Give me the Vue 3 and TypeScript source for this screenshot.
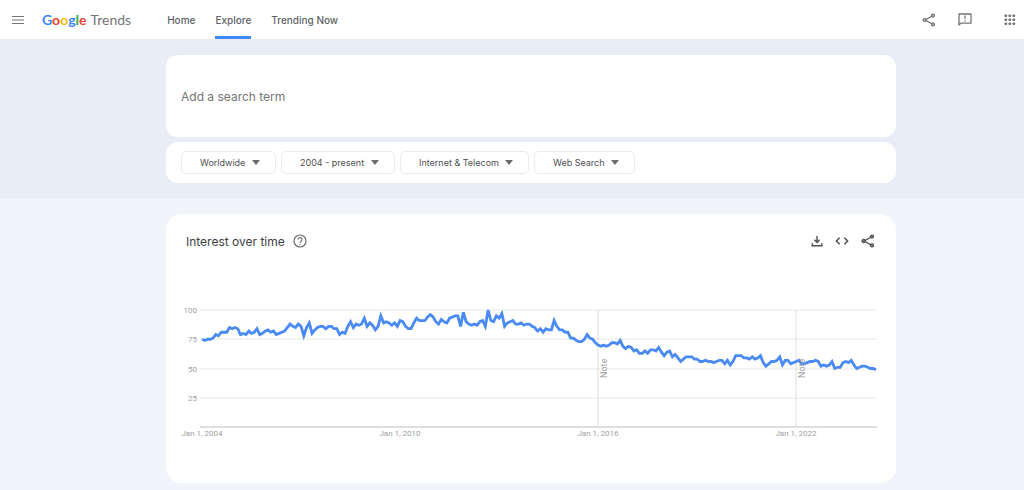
<script setup lang="ts">
import { ref } from 'vue'

interface Filter {
  id: string
  label: string
  value: string
}

const links = [
  { label: 'Home', active: false },
  { label: 'Explore', active: true },
  { label: 'Trending Now', active: false },
]

const filters: Filter[] = [
  { id: 'geo', label: 'Location', value: 'Worldwide' },
  { id: 'time', label: 'Time range', value: '2004 - present' },
  { id: 'category', label: 'Category', value: 'Internet & Telecom' },
  { id: 'source', label: 'Search type', value: 'Web Search' },
]

const term = ref('')

// Monthly interest values, January 2004 onwards
const interest: number[] = [
  75, 74, 75, 75, 76, 79, 78, 81, 81, 81, 85, 84,
  85, 84, 79, 80, 79, 82, 80, 81, 84, 79, 80, 82,
  83, 81, 82, 79, 80, 81, 82, 85, 88, 86, 85, 88,
  86, 78, 85, 89, 80, 83, 85, 86, 86, 84, 86, 86,
  84, 84, 79, 81, 80, 86, 90, 85, 88, 87, 88, 93,
  86, 89, 87, 83, 86, 95, 89, 90, 89, 87, 89, 86,
  91, 90, 86, 84, 84, 89, 93, 91, 91, 91, 94, 96,
  94, 90, 88, 92, 90, 89, 93, 94, 95, 95, 86, 98,
  90, 88, 87, 88, 87, 90, 91, 86, 100, 91, 90, 95,
  93, 97, 86, 89, 90, 91, 88, 88, 89, 87, 88, 88,
  86, 85, 82, 84, 81, 84, 83, 83, 91, 86, 83, 83,
  81, 81, 76, 76, 74, 73, 73, 75, 79, 76, 75, 72,
  70, 69, 70, 69, 70, 72, 72, 71, 74, 69, 67, 69,
  68, 65, 66, 63, 63, 65, 63, 66, 66, 65, 68, 64,
  61, 64, 65, 60, 62, 59, 56, 58, 60, 60, 60, 58,
  58, 56, 56, 57, 56, 56, 55, 56, 57, 57, 54, 57,
  53, 56, 61, 61, 61, 59, 59, 58, 60, 58, 59, 61,
  55, 52, 54, 56, 56, 57, 60, 53, 57, 57, 54, 55,
  56, 57, 54, 54, 55, 56, 56, 57, 56, 52, 53, 52,
  53, 56, 50, 51, 51, 55, 56, 55, 57, 53, 50, 51,
  52, 52, 51, 50, 50, 49,
]

const plot = { left: 36, right: 710, top: 10, bottom: 127 }
const step = (plot.right - plot.left) / (interest.length - 1)
const xAt = (month: number) => plot.left + month * step
const yAt = (value: number) => plot.bottom - (value / 100) * (plot.bottom - plot.top)

const line = interest.map((v, i) => `${xAt(i).toFixed(2)},${yAt(v).toFixed(2)}`).join(' ')
const levels = [100, 75, 50, 25].map((v) => ({ value: v, y: Math.round(yAt(v)) }))
const dates = [2004, 2010, 2016, 2022].map((year) => ({
  label: `Jan 1, ${year}`,
  x: Math.round(xAt((year - 2004) * 12)),
}))
const notes = dates.slice(2)
</script>

<template>
  <div class="page">
    <header class="topbar">
      <button class="icon-btn menu" type="button" aria-label="Main menu">
        <svg width="12" height="10" viewBox="0 0 12 10">
          <path d="M0 1.5h12M0 5h12M0 8.5h12" stroke="#757575" stroke-width="1.2" />
        </svg>
      </button>
      <a class="logo" href="#">
        <span class="google"><span class="b">G</span><span class="r">o</span><span class="y">o</span><span class="b">g</span><span class="g">l</span><span class="r">e</span></span>
        <span class="product">Trends</span>
      </a>
      <nav class="nav">
        <a v-for="link in links" :key="link.label" href="#" :class="{ active: link.active }">{{ link.label }}</a>
      </nav>
      <div class="tools">
        <button class="icon-btn" type="button" aria-label="Share">
          <svg width="14" height="14" viewBox="0 0 14 14" fill="none" stroke="#757575" stroke-width="1.2">
            <path d="M3 7l8-4.4M3 7l8 4.4" />
            <g fill="#b5b5b5"><circle cx="2.6" cy="7" r="1.5" /><circle cx="11" cy="2.6" r="1.5" /><circle cx="11" cy="11.4" r="1.5" /></g>
          </svg>
        </button>
        <button class="icon-btn" type="button" aria-label="Send feedback">
          <svg width="14" height="14" viewBox="0 0 14 14" fill="none" stroke="#757575" stroke-width="1.3">
            <path d="M1 12V1h12v9.2H2.8z" stroke-linejoin="round" />
            <path d="M7 2.6v3.2M7 7.2v1.4" />
          </svg>
        </button>
        <button class="icon-btn apps" type="button" aria-label="Google apps">
          <svg width="12" height="12" viewBox="0 0 12 12" fill="#757575">
            <template v-for="r in 3" :key="r">
              <rect v-for="c in 3" :key="c" :x="c * 4 - 3.5" :y="r * 4 - 3.5" width="2.6" height="2.6" rx="0.8" />
            </template>
          </svg>
        </button>
      </div>
    </header>

    <section class="hero">
      <form class="search" @submit.prevent>
        <input v-model="term" type="text" placeholder="Add a search term" aria-label="Add a search term" />
      </form>
      <div class="filters">
        <label v-for="f in filters" :key="f.id" class="filter" :for="f.id">
          <select :id="f.id" :aria-label="f.label">
            <option>{{ f.value }}</option>
          </select>
        </label>
      </div>
    </section>

    <main class="content">
      <article class="card">
        <div class="card-head">
          <h1>Interest over time</h1>
          <button class="icon-btn help" type="button" aria-label="Help">
            <svg width="14" height="14" viewBox="0 0 14 14" fill="none" stroke="#6b6b6b" stroke-width="1.2">
              <circle cx="7" cy="7" r="6" />
              <path d="M5 5.6a2 2 0 1 1 3.2 1.6C7.4 7.8 7 8 7 8.9M7 9.9v1.2" />
            </svg>
          </button>
          <div class="actions">
            <button class="icon-btn" type="button" aria-label="Download CSV">
              <svg width="12" height="12" viewBox="0 0 12 12" fill="none" stroke="#505050" stroke-width="1.4">
                <path d="M6 1v6M3.4 4.8L6 7.4l2.6-2.6M1.2 8.2v2.6h9.6V8.2" />
              </svg>
            </button>
            <button class="icon-btn" type="button" aria-label="Embed">
              <svg width="14" height="12" viewBox="0 0 14 12" fill="none" stroke="#505050" stroke-width="1.5">
                <path d="M4.6 2.8L1.4 6l3.2 3.2M9.4 2.8L12.6 6 9.4 9.2" />
              </svg>
            </button>
            <button class="icon-btn" type="button" aria-label="Share chart">
              <svg width="14" height="14" viewBox="0 0 14 14" fill="none" stroke="#505050" stroke-width="1.3">
                <path d="M3 7l8-4.4M3 7l8 4.4" />
                <g fill="#888"><circle cx="2.6" cy="7" r="1.5" /><circle cx="11" cy="2.6" r="1.5" /><circle cx="11" cy="11.4" r="1.5" /></g>
              </svg>
            </button>
          </div>
        </div>

        <svg class="chart" viewBox="0 0 730 140" role="img" aria-label="Interest over time chart">
          <g v-for="l in levels" :key="l.value">
            <line class="grid" :x1="plot.left - 2" :x2="plot.right + 1" :y1="l.y" :y2="l.y" />
            <text class="tick" x="31" :y="l.y + 3" text-anchor="end">{{ l.value }}</text>
          </g>
          <line class="axis" :x1="plot.left - 2" :x2="plot.right + 1" :y1="plot.bottom" :y2="plot.bottom" />
          <line v-for="n in notes" :key="n.label" class="note-line" :x1="n.x" :x2="n.x" :y1="plot.top" :y2="plot.bottom" />
          <polyline class="series" :points="line" />
          <text v-for="n in notes" :key="n.label" class="note" :transform="`translate(${n.x + 9} 78) rotate(-90)`">Note</text>
          <text v-for="d in dates" :key="d.label" class="tick" :x="d.x" y="136" text-anchor="middle">{{ d.label }}</text>
        </svg>
      </article>
    </main>
  </div>
</template>

<style>
body {
  margin: 0;
  background: #f1f4f9;
}
</style>

<style scoped>
.page {
  min-height: 100vh;
  background: #f1f4f9;
  font-family: Inter, Roboto, "Liberation Sans", sans-serif;
  color: #5f6368;
}

.topbar {
  display: flex;
  align-items: center;
  box-sizing: border-box;
  height: 39px;
  padding: 0 8px 0 12px;
  background: #fff;
}

.icon-btn {
  display: flex;
  align-items: center;
  justify-content: center;
  padding: 0;
  border: 0;
  background: none;
}

.logo {
  display: flex;
  gap: 4px;
  margin-left: 18px;
  font-family: Lato, "Liberation Sans", sans-serif;
  font-size: 14px;
  line-height: 20px;
  text-decoration: none;
}

.google {
  font-weight: 700;
}

.product {
  color: #757575;
}

.b { color: #4285f4; }
.r { color: #ea4335; }
.y { color: #fbbc05; }
.g { color: #34a853; }

.nav {
  display: flex;
  align-self: stretch;
  gap: 20px;
  margin-left: 36px;
}

.nav a {
  display: flex;
  align-items: center;
  border-top: 3px solid transparent;
  border-bottom: 3px solid transparent;
  color: #5f6368;
  font-size: 10px;
  font-weight: 500;
  text-decoration: none;
}

.nav a.active {
  border-bottom-color: #4285f4;
}

.tools {
  display: flex;
  align-items: center;
  gap: 22px;
  margin-left: auto;
}

.apps {
  margin-left: 10px;
}

.hero {
  display: grid;
  gap: 5px;
  padding: 16px 128px 15px 166px;
  background: #e8edf6;
}

.search,
.filters {
  border-radius: 12px;
  background: #fff;
}

.search input {
  box-sizing: border-box;
  display: block;
  width: 100%;
  height: 82px;
  padding: 0 15px;
  border: 0;
  border-radius: 12px;
  outline: 0;
  background: none;
  color: #3c4043;
  font-family: inherit;
  font-size: 12px;
}

.search input::placeholder {
  color: #757575;
  opacity: 1;
}

.filters {
  display: flex;
  gap: 5px;
  padding: 9px 15px;
}

.filter {
  position: relative;
}

.filter::after {
  content: "";
  position: absolute;
  top: 9px;
  right: 16px;
  border: 4px solid transparent;
  border-top: 5px solid #6b6b6b;
  border-bottom: 0;
  pointer-events: none;
}

.filter select {
  display: block;
  appearance: none;
  box-sizing: border-box;
  height: 23px;
  padding: 0 29px 0 18px;
  border: 1px solid #ebebeb;
  border-radius: 5px;
  background: #fff;
  color: #505050;
  font-family: inherit;
  font-size: 9px;
}

.content {
  padding: 16px 128px 7px 166px;
}

.card {
  padding-bottom: 43px;
  border-radius: 16px;
  background: #fff;
}

.card-head {
  display: flex;
  align-items: center;
  height: 54px;
  padding: 0 21px 0 20px;
}

.card-head h1 {
  margin: 0;
  color: #3c4043;
  font-size: 12px;
  font-weight: 400;
}

.help {
  margin-left: 8px;
}

.actions {
  display: flex;
  align-items: center;
  gap: 12px;
  margin-left: auto;
}

.chart {
  display: block;
  width: 100%;
  margin-top: 32px;
}

.grid {
  stroke: #e8e8e8;
}

.axis {
  stroke: #bdbdbd;
}

.note-line {
  stroke: #dedede;
}

.series {
  fill: none;
  stroke: #4a8af4;
  stroke-width: 2.8;
}

.tick {
  fill: #a0a0a0;
  font-family: Roboto, "Liberation Sans", sans-serif;
  font-size: 8px;
}

.note {
  fill: #a0a0a0;
  font-family: Roboto, "Liberation Sans", sans-serif;
  font-size: 9px;
}
</style>
